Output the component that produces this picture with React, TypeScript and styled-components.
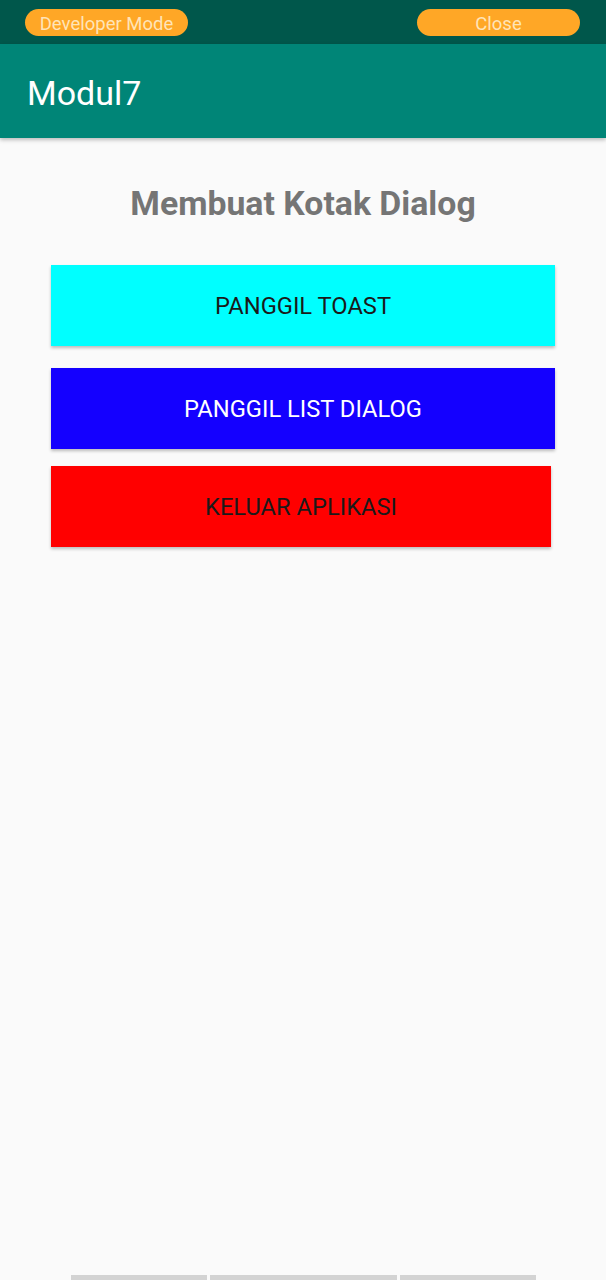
import React from "react";
import styled, { createGlobalStyle } from "styled-components";

const Global = createGlobalStyle`
  html, body { margin: 0; padding: 0; }
  body { background: #fafafa; font-family: Roboto, "Noto Sans", sans-serif; }
`;

const Screen = styled.div`
  display: flex;
  flex-direction: column;
  min-height: 1280px;
  background: #fafafa;
`;

const StatusBar = styled.div`
  height: 44px;
  background: #00574b;
  display: flex;
  align-items: center;
  justify-content: space-between;
  padding: 0 26px 0 25px;
  box-sizing: border-box;
`;

const Pill = styled.div<{ $w: number }>`
  width: ${(p) => p.$w}px;
  height: 27px;
  box-sizing: border-box;
  padding-top: 2px;
  margin-top: 1px;
  border-radius: 14px;
  background: #ffa726;
  color: #ffe4b8;
  font-size: 18.5px;
  display: flex;
  align-items: center;
  justify-content: center;
`;

const AppBar = styled.div`
  height: 94px;
  box-sizing: border-box;
  padding: 3px 0 0 27px;
  background: #008577;
  display: flex;
  align-items: center;
  color: #fff;
  font-size: 34px;
  box-shadow: 0 2px 4px rgba(0, 0, 0, 0.25);
  position: relative;
  z-index: 1;
`;

const Content = styled.div`
  display: flex;
  flex-direction: column;
  align-items: flex-start;
  padding: 0 51px;
  flex: 1;
`;

const Heading = styled.h1`
  align-self: stretch;
  margin: 46px 0 0;
  text-align: center;
  font-size: 33.8px;
  font-weight: 700;
  color: #757575;
  line-height: 40px;
`;

const ActionButton = styled.button<{ $bg: string; $fg: string; $w: number; $mt: number }>`
  width: ${(p) => p.$w}px;
  height: 81px;
  margin-top: ${(p) => p.$mt}px;
  border: none;
  background: ${(p) => p.$bg};
  color: ${(p) => p.$fg};
  font-family: Roboto, sans-serif;
  font-size: 23.7px;
  box-shadow: 0 2px 3px rgba(0, 0, 0, 0.25);
  padding: 0;
`;

const NavBar = styled.div`
  display: flex;
  justify-content: center;
  gap: 3px;
  height: 5px;
  align-items: flex-end;
`;

const NavSeg = styled.div<{ $w: number }>`
  width: ${(p) => p.$w}px;
  height: 5px;
  background: #d3d3d3;
`;

export default function App() {
  return (
    <>
      <Global />
      <Screen>
        <StatusBar>
          <Pill $w={163}>Developer Mode</Pill>
          <Pill $w={163}>Close</Pill>
        </StatusBar>
        <AppBar>Modul7</AppBar>
        <Content>
          <Heading>Membuat Kotak Dialog</Heading>
          <ActionButton $bg="#00ffff" $fg="#1a1a1a" $w={504} $mt={41}>
            PANGGIL TOAST
          </ActionButton>
          <ActionButton $bg="#1400ff" $fg="#ffffff" $w={504} $mt={22}>
            PANGGIL LIST DIALOG
          </ActionButton>
          <ActionButton $bg="#ff0000" $fg="#1a1a1a" $w={500} $mt={17}>
            KELUAR APLIKASI
          </ActionButton>
        </Content>
        <NavBar>
          <NavSeg $w={136} />
          <NavSeg $w={187} />
          <NavSeg $w={136} />
        </NavBar>
      </Screen>
    </>
  );
}
